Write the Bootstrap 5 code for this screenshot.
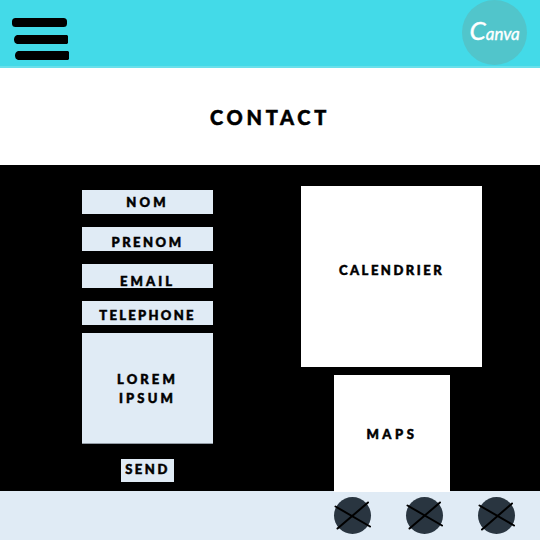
<!DOCTYPE html>
<html lang="fr">
<head>
<meta charset="utf-8">
<meta name="viewport" content="width=device-width, initial-scale=1">
<title>Contact</title>
<link href="https://cdn.jsdelivr.net/npm/bootstrap@5.3.0/dist/css/bootstrap.min.css" rel="stylesheet">
<style>
body{width:540px;height:540px;overflow:hidden;background:#fff;color:#000;font-family:Lato,sans-serif;font-weight:900;font-size:13px;line-height:18px}
svg{display:block}
.topbar{height:68px;background:#43dae8;border-bottom:2px solid #69e0eb}
.heading{height:97px;padding-top:1px}
.heading h1{font-size:20px;line-height:24px;font-weight:900;letter-spacing:3.7px;margin-right:-3px;-webkit-text-stroke:.5px #000}
.main-area{height:326px;background:#000}
.form-col{width:131px;margin-left:82px;padding-top:25px}
.field{height:24px;margin-bottom:13px;background:#e0ebf5}
.field,.message,.send,.tile{text-align:center;white-space:nowrap}
.field-nom{padding-top:3px}
.field-prenom{padding-top:6px}
.field-email{padding-top:8px}
.field-phone{padding-top:5px}
.lbl{display:block;letter-spacing:2.5px;-webkit-text-stroke:.5px #000}
.wide{letter-spacing:3.1px}
.wider{letter-spacing:3.6px}
.tight{letter-spacing:2.3px}
.message{height:111px;margin-top:-5px;padding-top:37px;line-height:19px;background:#e0ebf5;border-bottom:1px solid #929ba5}
.send{width:53px;height:23px;margin:15px 0 0 39px;padding:0 0 3px;border:0;border-radius:0;background:#e0ebf5;color:#000;font:inherit;line-height:18px}
.tiles-col{width:181px;margin-left:88px;padding-top:21px}
.tile{background:#fff}
.calendar{height:181px;padding-top:75px}
.map-tile{width:116px;height:117px;margin:8px 0 0 33px;padding-top:50px}
.foot{height:49px;background:#e0ebf5;padding:5px 24px 0 0;gap:32px}
</style>
<script src="https://cdn.jsdelivr.net/npm/bootstrap@5.3.0/dist/js/bootstrap.bundle.min.js"></script>
</head>
<body class="d-flex flex-column">
<header class="topbar d-flex justify-content-between flex-shrink-0">
  <svg width="80" height="66" role="img" aria-label="Menu"><rect x="12" y="18" width="55" height="9" rx="3.5"/><path d="M17 35H67L68 36V43L67 44H17Q14 43 14 39.500T17 35ZM18 51H68L69 52V59L68 60H18Q15 59 15 55.500T18 51Z"/></svg>
  <svg width="78" height="66" role="img" aria-label="Canva"><circle cx="32.500" cy="32.500" r="32.500" fill="#51c5cb"/><text x="7.500" y="39.500" fill="#fff" stroke="#fff" stroke-width=".4" font-family="Lato,sans-serif" font-style="italic" font-weight="400" font-size="17"><tspan font-size="26">C</tspan><tspan>anva</tspan></text></svg>
</header>
<section class="heading d-flex align-items-center justify-content-center flex-shrink-0"><h1 class="m-0">CONTACT</h1></section>
<main class="main-area d-flex flex-shrink-0">
  <form class="form-col">
    <div class="field field-nom"><span class="lbl wide">NOM</span></div>
    <div class="field field-prenom"><span class="lbl">PRENOM</span></div>
    <div class="field field-email"><span class="lbl wide">EMAIL</span></div>
    <div class="field field-phone"><span class="lbl tight">TELEPHONE</span></div>
    <div class="message"><span class="lbl wide">LOREM<br>IPSUM</span></div>
    <button type="button" class="send d-block"><span class="lbl">SEND</span></button>
  </form>
  <section class="tiles-col">
    <div class="tile calendar"><span class="lbl">CALENDRIER</span></div>
    <div class="tile map-tile position-relative z-1"><span class="lbl wider">MAPS</span></div>
  </section>
</main>
<footer class="foot d-flex justify-content-end flex-shrink-0">
  <svg width="40" height="40"><circle cx="20.500" cy="19.500" r="18.500" fill="#293540"/><path d="M3.500 10.500L38 30.500M5.500 32.500L36 6.500" stroke="#000" stroke-width="2" stroke-linecap="round"/></svg>
  <svg width="40" height="40"><circle cx="20.500" cy="19.500" r="18.500" fill="#293540"/><path d="M3.500 9.500L38 29.500M5.500 32.500L36 6.500" stroke="#000" stroke-width="2" stroke-linecap="round"/></svg>
  <svg width="40" height="40"><circle cx="20.500" cy="19.500" r="18.500" fill="#293540"/><path d="M3.500 9.500L38 29.500M6 33.500L36 7.500" stroke="#000" stroke-width="2" stroke-linecap="round"/></svg>
</footer>
</body>
</html>
